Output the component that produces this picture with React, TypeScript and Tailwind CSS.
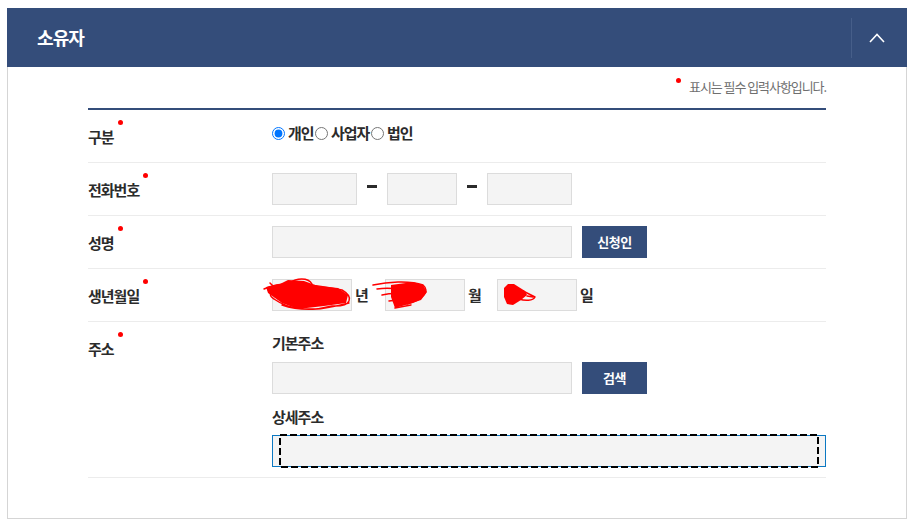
const font = { fontFamily: '"Noto Sans CJK KR", "Noto Sans", sans-serif' };

function RequiredDot({ className }: { className: string }) {
  return <span className={`absolute h-[5px] w-[5px] rounded-full bg-[#ff0000] ${className}`} />;
}

function Label({ text }: { text: string }) {
  return (
    <span className="relative text-[15px] leading-[22px] font-bold tracking-[-1px] text-[#2b2b2b]">
      {text}
      <RequiredDot className="-right-[9px] -top-[6px]" />
    </span>
  );
}

function Field({ className = "" }: { className?: string }) {
  return <input type="text" className={`h-8 border border-[#dcdcdc] bg-[#f4f4f4] ${className}`} />;
}

function Row({ label, children }: { label: string; children: React.ReactNode }) {
  return (
    <div className="flex h-[53px] items-center border-b border-[#ececec]">
      <div className="w-[184px]">
        <Label text={label} />
      </div>
      <div className="flex flex-1 items-center">{children}</div>
    </div>
  );
}

function Word({ children, className = "" }: { children: React.ReactNode; className?: string }) {
  return (
    <span className={`text-[15px] leading-[22px] font-bold tracking-[-1px] text-[#2b2b2b] ${className}`}>
      {children}
    </span>
  );
}

function NavyButton({ text }: { text: string }) {
  return (
    <button
      type="button"
      className="ml-[10px] h-8 w-[65px] bg-[#344d7a] text-[13px] font-bold tracking-[-0.4px] text-white"
    >
      {text}
    </button>
  );
}

function Dash() {
  return <span className="mx-[10px] -mt-[5px] h-[3px] w-[10px] bg-[#2b2b2b]" />;
}

function DateField({ scribble, fill }: { scribble: string; fill: string }) {
  return (
    <span className="relative block h-8 w-20">
      <Field className="w-20" />
      <svg className="absolute left-0 top-0 overflow-visible" width="80" height="32" fill="none">
        <path d={fill} fill="#ff0000" />
        <path d={scribble} stroke="#ff0000" strokeWidth="1.5" strokeLinejoin="round" strokeLinecap="round" />
      </svg>
    </span>
  );
}

export default function App() {
  return (
    <div className="h-[525px] w-[913px] bg-white pl-[7px] pt-2" style={font}>
      <div className="w-[900px]">
        <div className="flex h-[59px] items-center bg-[#344d7a] pl-[30px]">
          <h2 className="flex-1 text-[18px] font-bold tracking-[-0.9px] text-white">소유자</h2>
          <div className="flex h-10 w-[56px] items-center justify-center border-l border-[#465e89] pr-[5px]">
            <svg width="16" height="10" viewBox="0 0 16 10" fill="none">
              <path d="M1 9 L8 1.5 L15 9" stroke="#ffffff" strokeWidth="1.6" />
            </svg>
          </div>
        </div>

        <div className="h-[452px] border border-t-0 border-[#d5d5d5] pl-[80px] pr-[80px]">
          <div className="flex h-[41px] items-end justify-end pb-[12px]">
            <span className="relative text-[13px] leading-[18px] tracking-[-1.07px] text-[#6f6f6f]">
              <RequiredDot className="-left-[13px] top-0" />
              표시는 필수 입력사항입니다.
            </span>
          </div>

          <div className="border-t-2 border-[#344d7a]">
            <Row label="구분">
              <div className="-mt-[6px] flex items-center">
                <input type="radio" name="kind" defaultChecked className="h-[13px] w-[13px]" />
                <Word className="ml-[3px] w-[27px]">개인</Word>
                <input type="radio" name="kind" className="h-[13px] w-[13px]" />
                <Word className="ml-[3px] w-[40px]">사업자</Word>
                <input type="radio" name="kind" className="h-[13px] w-[13px]" />
                <Word className="ml-[3px]">법인</Word>
              </div>
            </Row>

            <Row label="전화번호">
              <Field className="w-[85px]" />
              <Dash />
              <Field className="w-[70px]" />
              <Dash />
              <Field className="w-[85px]" />
            </Row>

            <Row label="성명">
              <Field className="w-[300px]" />
              <NavyButton text="신청인" />
            </Row>

            <Row label="생년월일">
              <DateField
                fill="M-6 8 L8 5 L16 1 L32 2 L46 7 L66 9 L76 16 L74 24 L52 27 L26 30 L10 24 L-4 14 Z"
                scribble="M-8 10 C10 1 40 5 70 11 C82 18 80 28 60 27 C38 33 16 30 2 20 C-8 14 4 8 26 10 M-2 4 L10 16 M18 4 C24 -1 36 -2 40 5 M10 26 C30 33 50 31 77 24 M48 14 L72 20"
              />
              <Word className="ml-[3px] w-[30px]">년</Word>
              <DateField
                fill="M6 6 L28 3 L38 6 L42 13 L36 21 L24 25 L10 29 L6 18 Z"
                scribble="M-12 6 C2 3 24 1 38 6 C45 12 38 21 22 25 M-8 10 C4 8 14 10 24 12 M-3 16 C6 14 16 14 28 16 M4 22 L20 20 M10 29 L26 26"
              />
              <Word className="ml-[3px] w-[29px]">월</Word>
              <DateField
                fill="M7 9 L11 5 L17 5 L28 12 L30 16 L24 21 L16 26 L10 25 L7 18 Z"
                scribble="M26 12 L38 18 C36 22 28 22 22 20 M30 17 L36 18"
              />
              <Word className="ml-[3px]">일</Word>
            </Row>

            <div className="flex h-[156px] border-b border-[#ececec] pt-[14px]">
              <div className="w-[184px]">
                <Label text="주소" />
              </div>
              <div className="-mt-[4px] flex-1">
                <div className="mb-2 text-[15px] leading-[22px] font-bold tracking-[-1px] text-[#2b2b2b]">
                  기본주소
                </div>
                <div className="flex">
                  <Field className="w-[300px]" />
                  <NavyButton text="검색" />
                </div>
                <div className="mb-[7px] mt-3 text-[15px] leading-[22px] font-bold tracking-[-1px] text-[#2b2b2b]">
                  상세주소
                </div>
                <div className="relative h-8 w-[554px]">
                  <input type="text" className="h-8 w-full border border-[#0b78c2] bg-[#f4f4f4]" />
                  {/* focus ring drawn by the browser in the original */}
                  <svg className="pointer-events-none absolute -top-px left-[7px]" width="540" height="34" fill="none">
                    <rect x="1" y="1" width="538" height="32" stroke="#000000" strokeWidth="2" strokeDasharray="7 3" />
                  </svg>
                </div>
              </div>
            </div>
          </div>
        </div>
      </div>
    </div>
  );
}
